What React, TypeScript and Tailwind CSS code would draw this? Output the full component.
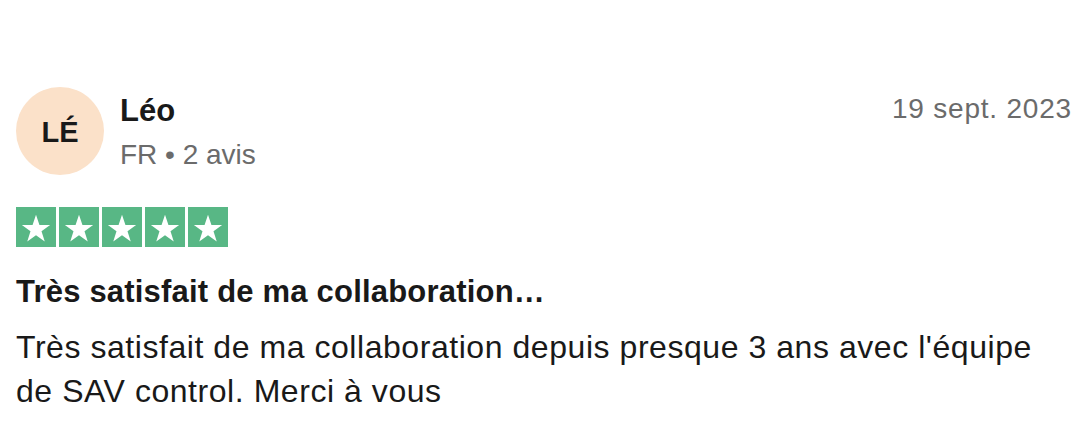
import React from "react";

function Star() {
  return (
    <svg viewBox="0 0 24 24" className="w-[30px] h-[30px]">
      <path
        d="M12 2.2l2.75 8.1h8.55l-6.9 5.05 2.6 8.2L12 18.5l-7 5.05 2.6-8.2-6.9-5.05h8.55z"
        fill="#ffffff"
      />
    </svg>
  );
}

export default function App() {
  return (
    <div
      className="w-[1074px] h-[445px] bg-white text-[#191919] pl-[16px] pr-[2px] pt-[87px]"
      style={{ fontFamily: '"Liberation Sans", Arial, sans-serif' }}
    >
      <div className="flex items-start">
        <div className="w-[88px] h-[88px] rounded-full bg-[#fbe1c9] flex items-center justify-center shrink-0 pt-[3px]">
          <span className="text-[29px] font-bold leading-none">LÉ</span>
        </div>
        <div className="ml-[16px] flex flex-col pt-[6px]">
          <span className="text-[31px] font-bold leading-[36px]">Léo</span>
          <span className="text-[28px] leading-[32px] mt-[10px] text-[#6b6b6b]">FR • 2 avis</span>
        </div>
        <div className="ml-auto pt-[6px] text-[28px] leading-[32px] tracking-[0.8px] text-[#6b6b6b]">19 sept. 2023</div>
      </div>
      <div className="flex gap-[3px] mt-[32px]">
        {[0, 1, 2, 3, 4].map((i) => (
          <div key={i} className="w-[40px] h-[40px] bg-[#58b785] flex items-center justify-center">
            <Star />
          </div>
        ))}
      </div>
      <div className="mt-[27px] text-[31px] font-bold leading-[36px] tracking-[0.2px]">Très satisfait de ma collaboration…</div>
      <p className="mt-[15px] text-[32px] leading-[44px] tracking-[0.55px] max-w-[1040px]">
        Très satisfait de ma collaboration depuis presque 3 ans avec l'équipe de SAV control. Merci à vous
      </p>
    </div>
  );
}
